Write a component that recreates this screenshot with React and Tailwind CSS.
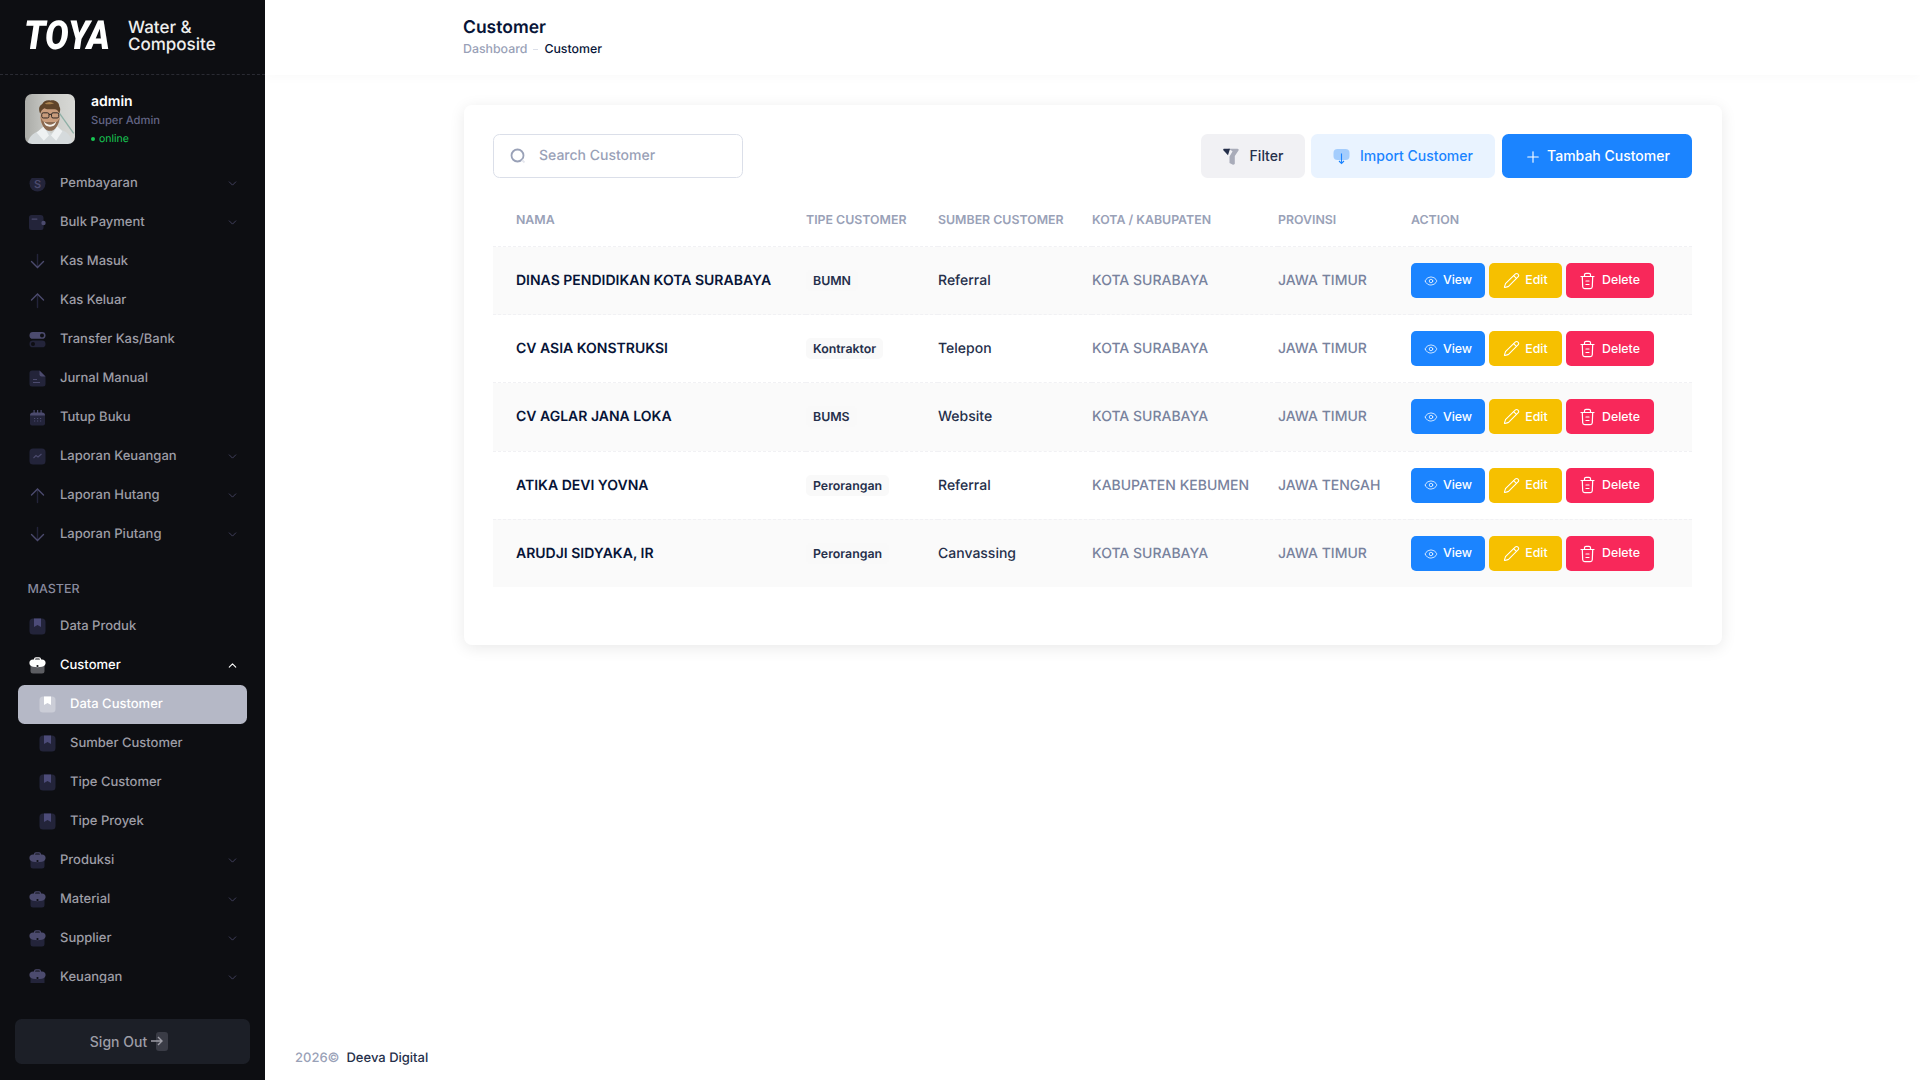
import React from "react";
import { Eye, Pencil, Plus, ChevronDown, ChevronUp } from "lucide-react";

const LIGHT = "#4c4b6e";
const DARK = "#23243a";

function PayIcon() {
  return (
    <svg width="17" height="17" viewBox="0 0 17 17">
      <circle cx="8.5" cy="8.5" r="8" fill={DARK} />
      <text x="8.5" y="12.5" textAnchor="middle" fontSize="11" fontWeight="600" fill={LIGHT}>
        S
      </text>
    </svg>
  );
}

function WalletIcon() {
  return (
    <svg width="17" height="17" viewBox="0 0 17 17">
      <path d="M2.5 1h9a3 3 0 0 1 3 3v10a2 2 0 0 1-2 2h-10a2.500 2.500 0 0 1-2.500-2.500V3.500A2.500 2.500 0 0 1 2.500 1z" fill={DARK} />
      <rect x="2.500" y="4.500" width="6" height="1.200" rx=".6" fill={LIGHT} />
      <circle cx="14.500" cy="9" r="2.200" fill={LIGHT} />
    </svg>
  );
}

function ArrowDownIcon() {
  return (
    <svg width="17" height="17" viewBox="0 0 17 17" fill="none" strokeWidth="1.400" strokeLinecap="round">
      <path d="M8.500 1.500v13" stroke={DARK} />
      <path d="M2.500 8.500l6 6 6-6" stroke={LIGHT} />
    </svg>
  );
}

function ArrowUpIcon() {
  return (
    <svg width="17" height="17" viewBox="0 0 17 17" fill="none" strokeWidth="1.400" strokeLinecap="round">
      <path d="M8.500 15.500v-13" stroke={DARK} />
      <path d="M2.500 8l6-6 6 6" stroke={LIGHT} />
    </svg>
  );
}

function ToggleIcon() {
  return (
    <svg width="17" height="17" viewBox="0 0 17 17">
      <rect x=".5" y="1" width="16" height="6.800" rx="3.400" fill={LIGHT} />
      <circle cx="13" cy="4.400" r="2" fill="#0d0e12" />
      <rect x=".5" y="9.500" width="16" height="6.800" rx="3.400" fill={DARK} />
      <circle cx="4" cy="12.900" r="2" fill="#0d0e12" />
    </svg>
  );
}

function FileIcon() {
  return (
    <svg width="17" height="17" viewBox="0 0 17 17">
      <path d="M3 .5h7.500L16.500 6.500V14a2.500 2.500 0 0 1-2.500 2.500H3A2.500 2.500 0 0 1 .5 14V3A2.500 2.500 0 0 1 3 .5z" fill={DARK} />
      <path d="M10.500.5l6 6h-4a2 2 0 0 1-2-2z" fill={LIGHT} />
      <rect x="4" y="9" width="4" height="1" fill={LIGHT} />
      <rect x="4" y="12" width="7" height="1" fill={LIGHT} />
    </svg>
  );
}

function CalendarIcon() {
  return (
    <svg width="17" height="17" viewBox="0 0 17 17">
      <rect x="1" y="4.500" width="15" height="12" rx="2" fill={DARK} />
      <path d="M1 6.500a3 3 0 0 1 3-3h9a3 3 0 0 1 3 3z" fill={LIGHT} />
      <rect x="4.500" y="1" width="1.200" height="3" fill={LIGHT} />
      <rect x="8" y="1" width="1.200" height="3" fill={LIGHT} />
      <rect x="11.500" y="1" width="1.200" height="3" fill={LIGHT} />
      <g fill={LIGHT}>
        <rect x="5" y="9" width="1.200" height="1" />
        <rect x="8" y="9" width="1.200" height="1" />
        <rect x="11" y="9" width="1.200" height="1" />
        <rect x="5" y="11.500" width="1.200" height="1" />
        <rect x="8" y="11.500" width="1.200" height="1" />
        <rect x="11" y="11.500" width="1.200" height="1" />
      </g>
    </svg>
  );
}

function ChartIcon() {
  return (
    <svg width="17" height="17" viewBox="0 0 17 17" fill="none">
      <rect x=".5" y=".5" width="16" height="16" rx="3.500" fill={DARK} />
      <path d="M4.500 10l2.500-2.500 2 1.500 3.500-3" stroke={LIGHT} strokeWidth="1.100" />
    </svg>
  );
}

function BookmarkIcon({ active }) {
  return (
    <svg width="17" height="17" viewBox="0 0 17 17">
      <rect x=".5" y=".5" width="16" height="16" rx="3.500" fill={active ? "#ffffff" : DARK} fillOpacity={active ? 0.3 : 1} />
      <path d="M5 .5h7v8.500l-3.500-2-3.500 2z" fill={active ? "#ffffff" : "#4c4b78"} />
    </svg>
  );
}

function BriefcaseIcon({ active }) {
  const top = active ? "#ffffff" : LIGHT;
  const bottom = active ? "#5c5d62" : DARK;
  return (
    <svg width="17" height="17" viewBox="0 0 17 17" fill="none">
      <path d="M1.500 8h14v6a2.500 2.500 0 0 1-2.500 2.500H4A2.500 2.500 0 0 1 1.500 14z" fill={bottom} />
      <path d="M5.500 3V2.200A1.500 1.500 0 0 1 7 .8h3a1.500 1.500 0 0 1 1.500 1.400V3" stroke={top} strokeWidth="1.200" />
      <path d="M4 2.600h9c2.200 0 3.600 1.500 3.600 3.400S15 9.500 13 9.800c-3 .5-6 .5-9 0C2 9.500.4 8 .4 6S1.800 2.600 4 2.600z" fill={top} />
      <circle cx="8.500" cy="9" r="1.100" fill="#0d0e12" />
    </svg>
  );
}

function TrashIcon() {
  return (
    <svg width="15" height="18" viewBox="0 0 15 18" fill="none" stroke="#ffffff" strokeWidth="1.200" strokeLinecap="round">
      <path d="M1 4.500h13" />
      <path d="M4.500 4.500V2.800A1.500 1.500 0 0 1 6 1.300h3a1.500 1.500 0 0 1 1.500 1.500v1.700" />
      <path d="M2.300 4.500l.4 10.300a2 2 0 0 0 2 1.900h5.600a2 2 0 0 0 2-1.900l.4-10.300" />
      <path d="M6 9h3M6 12.500h3" />
    </svg>
  );
}

function Avatar() {
  return (
    <div className="w-[50px] h-[50px] shrink-0 rounded-[7px] overflow-hidden">
      <svg width="50" height="50" viewBox="0 0 50 50" className="blur-[0.5px] scale-[1.03]">
        <defs>
          <linearGradient id="avatarBg" x1="0" x2="1" y1="0" y2="0">
            <stop offset="0" stopColor="#a9aaa6" />
            <stop offset=".45" stopColor="#c9cac6" />
            <stop offset="1" stopColor="#d8d9d6" />
          </linearGradient>
        </defs>
        <rect width="50" height="50" fill="url(#avatarBg)" />
        <path d="M31 15l17 24" stroke="#8fb0a6" strokeWidth="1.300" />
        <path d="M3 50c1-7 5-11 11-13l6-4 6 6 7-5 6 3c4 2 7 6 8 13z" fill="#d5dadc" />
        <path d="M12 38l7-6 5 9-5 5zM37 37l-5-5-6 9 5 5z" fill="#eef1f2" />
        <ellipse cx="25" cy="23" rx="9.500" ry="12.500" fill="#c99c7c" />
        <path d="M16 23c.5 8 4 13.500 9 13.500S33.500 31 34.500 23c-1 3-2 4.500-3.500 5h-11c-2-.5-3-2-4-5z" fill="#8a6a52" />
        <path d="M19 27.500c3 4 9 4 12 0-.5 3.500-3 5-6 5s-5.500-1.500-6-5z" fill="#f4f0ea" />
        <path d="M15.500 20c-2-5-1-8 2-9.500 1-3 5-4.500 8-3.500 4-1 8.500 1.500 8.500 5.500 1.500 2 1 5 0 7-1-2.500-2.500-4-4.500-4s-8 .5-10-1c-2 1-3 2.500-4 5.500z" fill="#5f4329" />
        <path d="M20 10c3-2 6-2 9 0-2 .5-7 1.500-9 0z" fill="#a8814f" />
        <g fill="none" stroke="#26211f" strokeWidth=".9">
          <rect x="17" y="19" width="7" height="5" rx="1.500" />
          <rect x="26.500" y="19" width="7" height="5" rx="1.500" />
          <path d="M24 20.500h2.500" />
        </g>
      </svg>
    </div>
  );
}

const topMenu = [
  { label: "Pembayaran", icon: <PayIcon />, caret: true },
  { label: "Bulk Payment", icon: <WalletIcon />, caret: true },
  { label: "Kas Masuk", icon: <ArrowDownIcon /> },
  { label: "Kas Keluar", icon: <ArrowUpIcon /> },
  { label: "Transfer Kas/Bank", icon: <ToggleIcon /> },
  { label: "Jurnal Manual", icon: <FileIcon /> },
  { label: "Tutup Buku", icon: <CalendarIcon /> },
  { label: "Laporan Keuangan", icon: <ChartIcon />, caret: true },
  { label: "Laporan Hutang", icon: <ArrowUpIcon />, caret: true },
  { label: "Laporan Piutang", icon: <ArrowDownIcon />, caret: true },
];

const subMenu = ["Sumber Customer", "Tipe Customer", "Tipe Proyek"];
const bottomMenu = ["Produksi", "Material", "Supplier", "Keuangan"];

const customers = [
  { nama: "DINAS PENDIDIKAN KOTA SURABAYA", tipe: "BUMN", sumber: "Referral", kota: "KOTA SURABAYA", prov: "JAWA TIMUR" },
  { nama: "CV ASIA KONSTRUKSI", tipe: "Kontraktor", sumber: "Telepon", kota: "KOTA SURABAYA", prov: "JAWA TIMUR" },
  { nama: "CV AGLAR JANA LOKA", tipe: "BUMS", sumber: "Website", kota: "KOTA SURABAYA", prov: "JAWA TIMUR" },
  { nama: "ATIKA DEVI YOVNA", tipe: "Perorangan", sumber: "Referral", kota: "KABUPATEN KEBUMEN", prov: "JAWA TENGAH" },
  { nama: "ARUDJI SIDYAKA, IR", tipe: "Perorangan", sumber: "Canvassing", kota: "KOTA SURABAYA", prov: "JAWA TIMUR" },
];

function MenuItem({ icon, label, caret }) {
  return (
    <div className="flex items-center h-[39px] pl-[29px] pr-[26px] text-[13px] font-medium text-[#9d9da6]">
      <span className="w-[31px] flex shrink-0">{icon}</span>
      <span className="flex-1 pt-px">{label}</span>
      {caret && <ChevronDown size={13} strokeWidth={1.3} className="text-[#55547a]" />}
    </div>
  );
}

function Sidebar() {
  return (
    <aside className="w-[265px] h-screen shrink-0 bg-[#0d0e12] flex flex-col">
      <div className="h-[75px] shrink-0 flex items-center pl-[24px] border-b border-dashed border-[#2a2b33]">
        <span className="[font-family:Roboto,sans-serif] font-black italic text-[40px] leading-none text-white origin-left scale-x-[.88] w-[104px] -mt-[2px]">
          TOYA
        </span>
        <span className="text-[17px] leading-[17px] font-medium text-[#eeeeee] -mt-[1px]">
          Water &amp;
          <br />
          Composite
        </span>
      </div>
      <div className="h-[103px] shrink-0 flex pl-[25px] pt-[19px]">
        <Avatar />
        <div className="ml-[16px] -mt-[1px]">
          <div className="text-[14px] leading-[17px] font-semibold text-white">admin</div>
          <div className="text-[11.200px] leading-[14px] mt-[3px] font-medium text-[#636585]">Super Admin</div>
          <div className="flex items-center mt-[6px] text-[10.500px] leading-[12px] text-[#17c653]">
            <span className="w-[4px] h-[4px] rounded-full bg-[#17c653] mr-[4px]" />
            online
          </div>
        </div>
      </div>
      <nav className="flex-1 overflow-hidden">
        <div className="-mt-[14px]">
          {topMenu.map((m) => (
            <MenuItem key={m.label} icon={m.icon} label={m.label} caret={m.caret} />
          ))}
          <div className="h-[53px] flex items-end pl-[27.500px] pb-[7px] text-[12.500px] font-medium text-[#8a8b9f]">MASTER</div>
          <MenuItem icon={<BookmarkIcon />} label="Data Produk" />
          <div className="flex items-center h-[39px] pl-[29px] pr-[26px] text-[13px] font-medium text-white">
            <span className="w-[31px] flex shrink-0">
              <BriefcaseIcon active />
            </span>
            <span className="flex-1 pt-px">Customer</span>
            <ChevronUp size={13} strokeWidth={2} className="text-white" />
          </div>
          <div className="flex items-center h-[39px] ml-[18px] mr-[18px] pl-[21px] rounded-[6.500px] bg-[#b5b8c6] text-[13px] font-medium text-white">
            <span className="w-[31px] flex shrink-0">
              <BookmarkIcon active />
            </span>
            <span className="pt-px">Data Customer</span>
          </div>
          {subMenu.map((s) => (
            <div key={s} className="flex items-center h-[39px] pl-[39px] text-[13px] font-medium text-[#9d9da6]">
              <span className="w-[31px] flex shrink-0">
                <BookmarkIcon />
              </span>
              <span className="pt-px">{s}</span>
            </div>
          ))}
          {bottomMenu.map((m) => (
            <MenuItem key={m} icon={<BriefcaseIcon />} label={m} caret />
          ))}
        </div>
      </nav>
      <div className="shrink-0 px-[15px] pt-[36px] pb-[16px]">
        <button className="w-full h-[45px] rounded-[6.500px] bg-[#1c1f27] flex items-center justify-center pr-[6px] text-[14px] font-medium text-[#9d9da6]">
          Sign Out
          <span className="relative w-[19px] h-[19px] ml-[3px]">
            <span className="absolute left-[6px] top-0 w-[12px] h-[19px] rounded-[3px] bg-[#3a3c46]" />
            <svg className="absolute left-0 top-[3px]" width="14" height="12" viewBox="0 0 14 12" fill="none" stroke="#9d9da6" strokeWidth="1.400">
              <path d="M1 6h11M8 2l4 4-4 4" />
            </svg>
          </span>
        </button>
      </div>
    </aside>
  );
}

function ActionButtons() {
  return (
    <div className="flex gap-[4px] text-[12.350px] font-medium text-white">
      <button className="w-[74px] h-[35px] rounded-[5px] bg-[#1b84ff] flex items-center justify-center gap-[5px]">
        <Eye size={14} strokeWidth={1.3} />
        View
      </button>
      <button className="w-[73px] h-[35px] rounded-[5px] bg-[#f6c000] flex items-center justify-center gap-[5px]">
        <Pencil size={17} strokeWidth={1.5} />
        Edit
      </button>
      <button className="w-[88px] h-[35px] rounded-[5px] bg-[#f8285a] flex items-center justify-center gap-[7px]">
        <TrashIcon />
        Delete
      </button>
    </div>
  );
}

function CustomerTable() {
  return (
    <table className="w-[1199px] table-fixed mt-[17px]">
      <colgroup>
        <col className="w-[313px]" />
        <col className="w-[132px]" />
        <col className="w-[154px]" />
        <col className="w-[186px]" />
        <col className="w-[133px]" />
        <col className="w-[281px]" />
      </colgroup>
      <thead>
        <tr className="h-[51.500px] text-left text-[12.350px] font-semibold text-[#99a1b7]">
          <th className="pl-[23px] font-semibold">NAMA</th>
          <th className="font-semibold">TIPE CUSTOMER</th>
          <th className="font-semibold">SUMBER CUSTOMER</th>
          <th className="font-semibold">KOTA / KABUPATEN</th>
          <th className="font-semibold">PROVINSI</th>
          <th className="font-semibold">ACTION</th>
        </tr>
      </thead>
      <tbody className="text-[14px]">
        {customers.map((c, i) => (
          <tr key={c.nama} className={`h-[68.200px] border-t border-dashed border-[#f1f1f4] ${i % 2 === 0 ? "bg-[#fafafa]" : "bg-white"}`}>
            <td className="pl-[23px] font-semibold text-[#071437]">{c.nama}</td>
            <td>
              <span className="inline-block h-[21px] leading-[21px] px-[7px] rounded-[5px] bg-[#f9f9f9] text-[12.350px] font-semibold text-[#252f4a]">
                {c.tipe}
              </span>
            </td>
            <td className="font-medium text-[#252f4a]">{c.sumber}</td>
            <td className="font-medium text-[#78829d]">{c.kota}</td>
            <td className="font-medium text-[#78829d]">{c.prov}</td>
            <td>
              <ActionButtons />
            </td>
          </tr>
        ))}
      </tbody>
    </table>
  );
}

function App() {
  return (
    <div className="flex h-screen overflow-hidden bg-white [font-family:Inter,sans-serif] [text-rendering:geometricPrecision]">
      <Sidebar />
      <main className="flex-1 flex flex-col min-w-0">
        <header className="h-[75px] shrink-0 pl-[198px] pt-[17px] shadow-[0_3px_10px_rgba(0,0,0,0.025)]">
          <h1 className="text-[17.500px] leading-[22px] font-semibold text-[#071437]">Customer</h1>
          <div className="flex items-center mt-[2px] text-[12.350px] leading-[16px] font-medium">
            <span className="text-[#99a1b7]">Dashboard</span>
            <span className="w-[5px] h-[1px] bg-[#dbdfe9] mx-[6px]" />
            <span className="text-[#071437]">Customer</span>
          </div>
        </header>
        <div className="flex-1 pl-[199px] pt-[30px]">
          <section className="w-[1258px] h-[540px] rounded-[8px] bg-white pl-[29px] pr-[30px] pt-[29px] shadow-[0_3px_16px_rgba(0,0,0,0.09)]">
            <div className="flex items-center">
              <div className="w-[250px] h-[44px] flex items-center rounded-[6.500px] border border-[#dbdfe9] pl-[16px]">
                <svg width="16" height="16" viewBox="0 0 16 16" fill="none" strokeWidth="1.800" className="-mt-[1px]">
                  <circle cx="7.500" cy="7.500" r="6" stroke="#99a1b7" />
                  <path d="M12 12l2.500 2.500" stroke="#e5e7ee" />
                </svg>
                <span className="ml-[13px] pb-[1px] text-[14px] font-medium text-[#99a1b7]">Search Customer</span>
              </div>
              <div className="ml-auto flex gap-[6px] text-[14px] font-medium">
                <button className="w-[104px] h-[44px] pb-[2px] rounded-[6.500px] bg-[#f1f1f4] text-[#252f4a] flex items-center justify-center gap-[11px]">
                  <svg width="16" height="17" viewBox="0 0 16 17" className="mt-[2px]">
                    <path d="M5 .8h9.500c1 0 1.500 1 1 1.800L11.800 8v7.500c0 1-1.300 1.500-2.300 1L6.500 15V8.500L9.500 3.500C9.800 3 7 1.800 5 .8z" fill="#a9acb9" />
                    <path d="M.8.800H7l-2 6.500L.6 2.600C0 1.800.2.800.8.800z" fill="#252f4a" />
                  </svg>
                  Filter
                </button>
                <button className="w-[184px] h-[44px] pb-[2px] rounded-[6.500px] bg-[#e9f3ff] text-[#1b84ff] flex items-center justify-center gap-[10px]">
                  <svg width="17" height="17" viewBox="0 0 17 17" fill="none" className="mt-[2px]">
                    <rect x=".5" y="1" width="16" height="11" rx="4" fill="#a4cdfd" />
                    <path d="M8.500 5.500v10M6 13l2.500 2.500L11 13" stroke="#1b84ff" strokeWidth="1.100" />
                  </svg>
                  Import Customer
                </button>
                <button className="w-[190px] ml-[1px] h-[44px] pb-[2px] rounded-[6.500px] bg-[#1b84ff] text-white flex items-center justify-center gap-[5px]">
                  <Plus size={18} strokeWidth={1.500} className="mt-[4px]" />
                  Tambah Customer
                </button>
              </div>
            </div>
            <CustomerTable />
          </section>
        </div>
        <footer className="h-[46px] shrink-0 pl-[30px] pt-[15px] text-[13px] font-medium text-[#252f4a]">
          <span className="text-[#99a1b7]">2026©</span>
          <span className="ml-[7px]">Deeva Digital</span>
        </footer>
      </main>
    </div>
  );
}

export default App;
